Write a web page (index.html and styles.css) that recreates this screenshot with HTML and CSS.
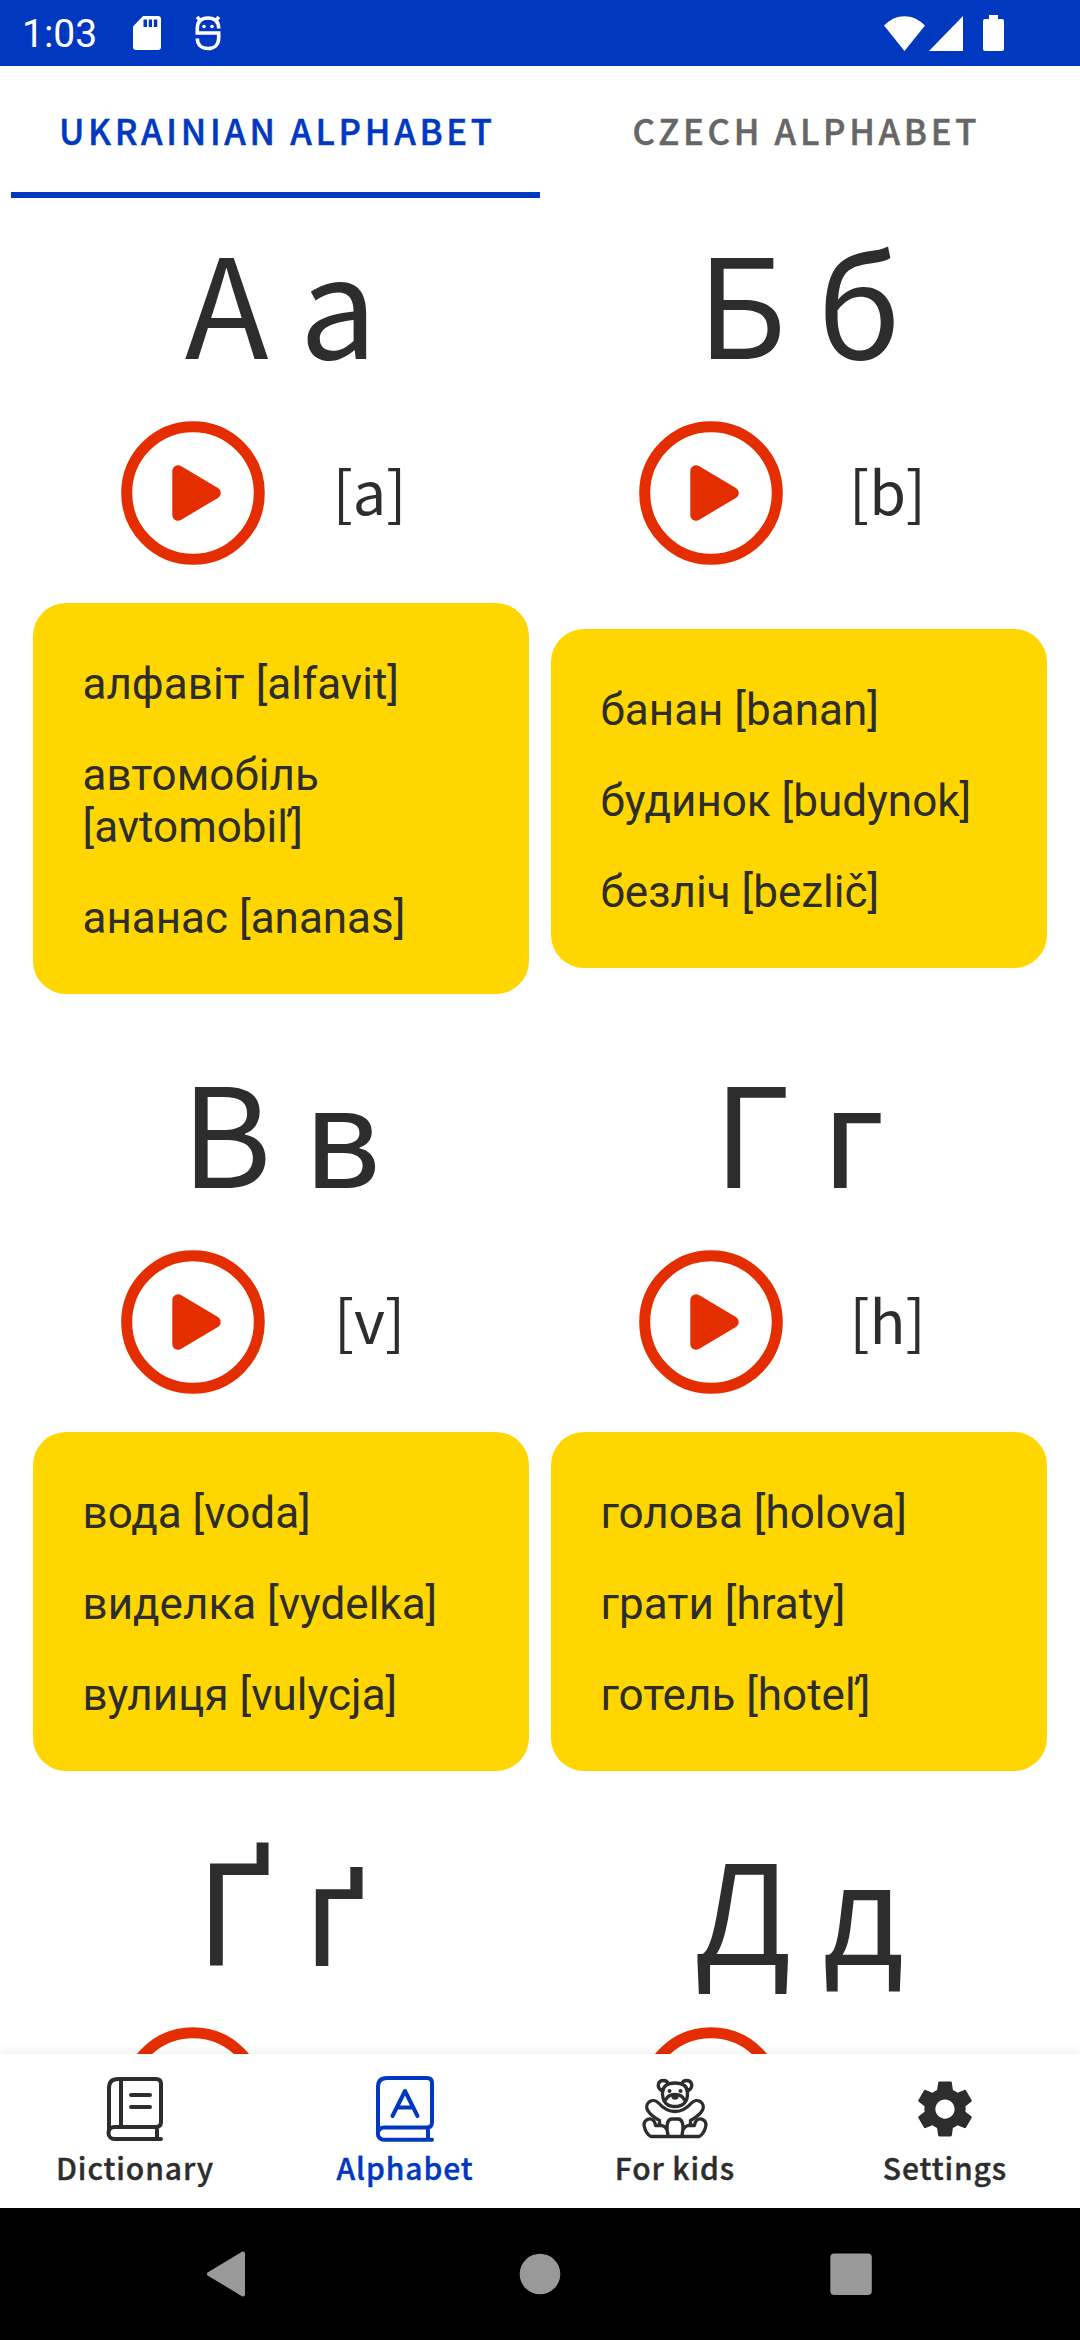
FILE: index.html
```html
<!DOCTYPE html>
<html lang="uk">
<head>
<meta charset="utf-8">
<title>Alphabet</title>
<link rel="stylesheet" href="styles.css">
</head>
<body>
<svg class="defs" width="0" height="0" aria-hidden="true">
  <symbol id="play" viewBox="0 0 144 144">
    <circle cx="72" cy="72" r="66.3" fill="none" stroke="currentColor" stroke-width="11"/>
    <path d="M57 50L94 72L57 94Z" fill="currentColor" stroke="currentColor" stroke-width="11.4" stroke-linejoin="round"/>
  </symbol>
</svg>
<header class="status">
  <span class="clock">1:03</span>
  <svg class="sd" viewBox="0 0 28 34"><path fill="#fff" fill-rule="evenodd" d="M10 0H25a3 3 0 0 1 3 3V31a3 3 0 0 1-3 3H3a3 3 0 0 1-3-3V10.500ZM10.500 3.500V11H14V3.500ZM15.700 3.500V11H19V3.500ZM20.800 3.500V11H24.300V3.500Z"/></svg>
  <svg class="badge" viewBox="0 0 26 36"><g fill="none" stroke="#fff" stroke-width="3.600"><path d="M23.700 13.500C23.700 6 19.500 3 13 3S2.300 6 2.300 13.500V18H23.700V23C23.700 30 19 33.500 13 33.500S2.300 30 2.300 23.500"/><path d="M2 2L6 6M24 2L20 6"/></g><circle cx="9" cy="11.500" r="1.800" fill="#fff"/><circle cx="17" cy="11.500" r="1.800" fill="#fff"/></svg>
  <span class="spacer"></span>
  <svg class="wifi" viewBox="0 0 41 35"><path fill="#fff" d="M0 9.500C12-3 29-3 41 9.500L20.500 35Z"/></svg>
  <svg class="signal" viewBox="0 0 34 35"><path fill="#fff" d="M34 0V35H0Z"/></svg>
  <svg class="battery" viewBox="0 0 21 36"><path fill="#fff" d="M6 0H15V4H19a2 2 0 0 1 2 2V34a2 2 0 0 1-2 2H2a2 2 0 0 1-2-2V6a2 2 0 0 1 2-2H6Z"/></svg>
</header>
<nav class="tabs">
  <div class="tab active">UKRAINIAN ALPHABET</div>
  <div class="tab">CZECH ALPHABET</div>
</nav>
<main class="list">
  <section class="cell">
    <h2>А а</h2>
    <div class="sound"><svg class="play"><use href="#play"/></svg><span>[a]</span></div>
    <div class="slot"><div class="card"><p>алфавіт [alfavit]</p><p>автомобіль [avtomobiľ]</p><p>ананас [ananas]</p></div></div>
  </section>
  <section class="cell">
    <h2>Б б</h2>
    <div class="sound"><svg class="play"><use href="#play"/></svg><span>[b]</span></div>
    <div class="slot"><div class="card"><p>банан [banan]</p><p>будинок [budynok]</p><p>безліч [bezlič]</p></div></div>
  </section>
  <section class="cell">
    <h2>В в</h2>
    <div class="sound"><svg class="play"><use href="#play"/></svg><span>[v]</span></div>
    <div class="slot"><div class="card"><p>вода [voda]</p><p>виделка [vydelka]</p><p>вулиця [vulycja]</p></div></div>
  </section>
  <section class="cell">
    <h2>Г г</h2>
    <div class="sound"><svg class="play"><use href="#play"/></svg><span>[h]</span></div>
    <div class="slot"><div class="card"><p>голова [holova]</p><p>грати [hraty]</p><p>готель [hoteľ]</p></div></div>
  </section>
  <section class="cell">
    <h2 class="wide">Ґ ґ</h2>
    <div class="sound"><svg class="play"><use href="#play"/></svg></div>
  </section>
  <section class="cell">
    <h2>Д д</h2>
    <div class="sound"><svg class="play"><use href="#play"/></svg></div>
  </section>
</main>
<nav class="bottom">
  <div class="item">
    <svg viewBox="0 0 66 66"><g fill="none" stroke="currentColor" stroke-width="4" stroke-linecap="round" stroke-linejoin="round"><path d="M7 55V12Q7 3 16 3H54Q59 3 59 8V46Q59 51 54 51H12.500a5.700 5.700 0 0 0 0 12H59M19 3V50M55 52V62M29 19H48M29 31H48"/></g></svg>
    <span>Dictionary</span>
  </div>
  <div class="item active">
    <svg viewBox="0 0 66 66"><g fill="none" stroke="currentColor" stroke-width="4" stroke-linecap="round" stroke-linejoin="round"><path d="M6 56V11Q6 2 15 2H55Q60 2 60 7V46Q60 51.500 55 51.500H12a6 6 0 0 0 0 12.300H60M56 52V63M20.500 40L33 15L45.500 40M25.500 31.500H40.500"/></g></svg>
    <span>Alphabet</span>
  </div>
  <div class="item">
    <svg viewBox="0 0 66 66"><g fill="none" stroke="currentColor" stroke-width="3.300" stroke-linecap="round" stroke-linejoin="round"><path d="M19.500 14.500C14 11 16 4.500 21.500 4.500Q25 4.500 26 7.500M46.500 14.500C52 11 50 4.500 44.500 4.500Q41 4.500 40 7.500M20.500 17Q20.500 7 33 7T45.500 17Q45.500 30.500 33 30.500T20.500 17Z"/><path d="M24 23.500Q26 18.500 33 18.500T42 23.500"/><path d="M16.500 27Q24 35.500 33 35.500T49.500 27C55 21 64 27 60.500 34C58.500 38 52 42.500 48.500 44.500V49M16.500 27C11 21 2 27 5.500 34C7.500 38 14 42.500 17.500 44.500V49"/><path d="M26 60Q23 43 30 43H36Q43 43 40 60M9 60.500Q3.500 58 2 49C2 43.500 8 41.500 11 44Q13 45.500 13.500 49.500H20Q25.500 51 26 59M57 60.500Q62.500 58 64 49C64 43.500 58 41.500 55 44Q53 45.500 52.500 49.500H46Q40.500 51 40 59M9 60.500H57"/></g><circle cx="27.500" cy="15" r="2" fill="currentColor"/><circle cx="38.500" cy="15" r="2" fill="currentColor"/><ellipse cx="33" cy="21" rx="3.500" ry="2.800" fill="currentColor"/></svg>
    <span>For kids</span>
  </div>
  <div class="item">
    <svg viewBox="0 0 24 24"><path fill="currentColor" d="M19.430 12.980c.04-.32.07-.64.07-.98s-.03-.66-.07-.98l2.110-1.650c.19-.15.24-.42.12-.64l-2-3.460c-.12-.22-.39-.3-.61-.22l-2.490 1c-.52-.4-1.080-.73-1.690-.98l-.38-2.650C14.460 2.180 14.250 2 14 2h-4c-.25 0-.46.18-.49.42l-.38 2.650c-.61.25-1.170.59-1.690.98l-2.490-1c-.23-.09-.49 0-.61.22l-2 3.460c-.13.22-.07.49.12.64l2.110 1.650c-.04.32-.07.65-.07.98s.03.66.07.98l-2.110 1.650c-.19.15-.24.42-.12.64l2 3.460c.12.22.39.3.61.22l2.490-1c.52.4 1.080.73 1.690.98l.38 2.650c.03.24.24.42.49.42h4c.25 0 .46-.18.49-.42l.38-2.650c.61-.25 1.170-.59 1.690-.98l2.490 1c.23.09.49 0 .61-.22l2-3.460c.12-.22.07-.49-.12-.64l-2.110-1.650zM12 15.500c-1.930 0-3.500-1.570-3.500-3.500s1.570-3.500 3.500-3.500 3.500 1.570 3.500 3.500-1.570 3.500-3.500 3.500z"/></svg>
    <span>Settings</span>
  </div>
</nav>
<footer class="system">
  <svg viewBox="0 0 46 46"><path d="M4 23L38 2.500V43.500Z" fill="#999" stroke="#999" stroke-width="4" stroke-linejoin="round"/></svg>
  <svg viewBox="0 0 46 46"><circle cx="23" cy="23" r="20.300" fill="#999"/></svg>
  <svg viewBox="0 0 46 46"><rect x="2.300" y="2.500" width="41.500" height="41.500" rx="4" fill="#999"/></svg>
</footer>
</body>
</html>
```
FILE: styles.css
```css
* { box-sizing: border-box; }
body {
  margin: 0;
  width: 1080px;
  height: 2340px;
  overflow: hidden;
  display: flex;
  flex-direction: column;
  background: #fff;
  color: #2d2d2d;
  font-family: "Noto Sans CJK SC", "Noto Sans", sans-serif;
}
svg { display: block; flex: none; }
.defs { position: absolute; }

.status {
  flex: none;
  height: 66px;
  display: flex;
  align-items: center;
  background: #0038bf;
  color: #fff;
  padding: 0 76px 0 22px;
}
.clock { width: 111px; font: 39px/66px Roboto, sans-serif; padding-top: 2px; }
.sd { width: 28px; height: 34px; }
.badge { width: 26px; height: 36px; margin-left: 34px; }
.spacer { flex: 1; }
.wifi { width: 41px; height: 35px; }
.signal { width: 34px; height: 35px; margin-left: 4px; }
.battery { width: 21px; height: 36px; margin-left: 20px; }

.tabs { flex: none; display: flex; height: 132px; padding: 0 11px; }
.tab {
  flex: 1;
  border-bottom: 6px solid transparent;
  text-align: center;
  font-size: 34.7px;
  font-weight: 500;
  line-height: 129px;
  letter-spacing: 3.7px;
  text-indent: 3.7px;
  -webkit-text-stroke: .5px currentColor;
  color: #666;
}
.tab.active { color: #0038bf; border-color: #0038bf; }

.list {
  flex: 1;
  min-height: 0;
  overflow: hidden;
  display: grid;
  grid-template-columns: 496px 496px;
  column-gap: 22px;
  align-content: start;
  padding: 0 33px;
}
.cell { display: flex; flex-direction: column; padding-bottom: 33px; }
h2 {
  margin: 0;
  height: 223px;
  line-height: 202px;
  font-size: 138px;
  font-weight: 400;
  text-align: center;
  white-space: pre;
}
.wide { font-size: 142px; line-height: 200px; }
.sound { display: flex; align-items: flex-start; height: 144px; padding-left: 88px; }
.play { width: 144px; height: 144px; color: #e52e00; }
.sound span { width: 209px; text-align: center; font-size: 59.4px; line-height: 136px; }
.slot { flex: 1; display: flex; align-items: center; padding-top: 38px; }
.card {
  flex: 1;
  display: flex;
  flex-direction: column;
  gap: 39px;
  padding: 55px 49.5px 50px;
  border-radius: 33px;
  background: #ffd600;
  font: 44px/52px Roboto, sans-serif;
}
.card p { margin: 0; }

.bottom {
  flex: none;
  display: flex;
  height: 154px;
  background: #fff;
  box-shadow: 0 0 12px rgba(0, 0, 0, .1);
  position: relative;
}
.item { flex: 1; display: flex; flex-direction: column; align-items: center; padding-top: 22px; }
.item.active { color: #0038bf; }
.item svg { width: 66px; height: 66px; }
.item span {
  font-size: 30px;
  font-weight: 500;
  line-height: 51px;
  letter-spacing: .9px;
  -webkit-text-stroke: .4px currentColor;
}

.system {
  flex: none;
  height: 132px;
  background: #000;
  display: flex;
  justify-content: space-between;
  align-items: center;
  padding: 0 206px 0 205px;
}
.system svg { width: 46px; height: 46px; }
```
